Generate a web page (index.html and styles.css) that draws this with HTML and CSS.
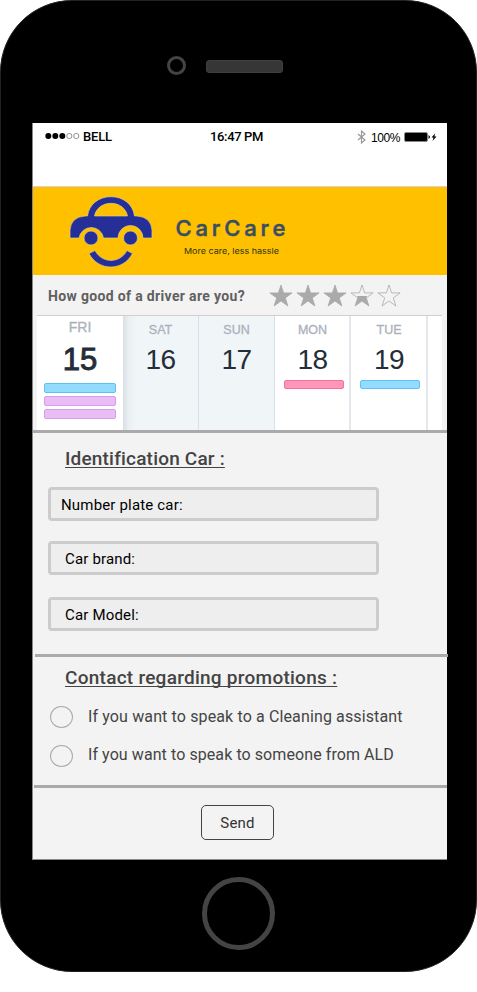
FILE: index.html
```html
<!DOCTYPE html>
<html lang="en">
<head>
<meta charset="utf-8">
<title>CarCare</title>
<link rel="stylesheet" href="styles.css">
</head>
<body>
<div class="phone">
  <div class="phone-top"><span class="camera"></span><span class="speaker"></span></div>
  <main class="screen">
    <header class="status">
      <div class="carrier">
        <svg width="35" height="8" viewBox="0 0 35 8"><g fill="#000"><circle cx="3.3" cy="4" r="3"/><circle cx="10.3" cy="4" r="3"/><circle cx="17.3" cy="4" r="3"/></g><g fill="none" stroke="#777" stroke-width=".8"><circle cx="24.3" cy="4" r="2.6"/><circle cx="31.3" cy="4" r="2.6"/></g></svg>
        <span class="bell">BELL</span>
      </div>
      <span class="time">16:47 PM</span>
      <div class="power">
        <svg width="10" height="14" viewBox="0 0 10 14" fill="none" stroke="#999" stroke-width="1.200"><path d="M1 4l7 6-3.500 3V1L8 4 1 10"/></svg>
        <span class="percent">100%</span>
        <svg class="battery" width="34" height="10" viewBox="0 0 34 10"><rect x=".5" y=".5" width="23" height="9" rx="1.500" stroke="#888"/><path d="M24.500 3Q26 4 26 5T24.500 7zM31 1.500l-3.500 4h2L28.500 9l4-4.500h-2z"/></svg>
      </div>
    </header>
    <section class="brand">
      <svg class="car" width="84" height="74" viewBox="69 195 84 74" fill="#262f97" stroke="#d5cf8c" stroke-width=".7">
        <path fill-rule="evenodd" d="M70 238V230Q71 217 85 216H87.500C89 204 99 196.700 111 196.700S133 204 134.500 216H137Q151 217 152 230V238H143A12.400 12.400 0 0 0 118 238H103.500A12.400 12.400 0 0 0 79 238ZM94.500 216H127.500C126 208 119 203.300 111 203.300S96 208 94.500 216Z"/>
        <circle cx="91" cy="238" r="7"/><circle cx="130.500" cy="238" r="7"/>
        <path d="M89 253.500L95 250.500C102 263.700 120 263.700 127 250.500L132.500 253.500C123 271.500 98.500 271.500 89 253.500Z"/>
      </svg>
      <svg class="wordmark" width="112" height="42" viewBox="175 216 112 42"><text class="name" x="175.500" y="235.500" textLength="110">CarCare</text><text class="tagline" x="184" y="254" textLength="95" lengthAdjust="spacingAndGlyphs">More care, less hassle</text></svg>
    </section>
    <section class="rating">
      <span class="question">How good of a driver are you?</span>
      <svg width="132" height="24" viewBox="269 284 132 24" fill="#aaa" stroke="#aaa" stroke-width=".8">
        <defs><path id="star" d="M0-11.500L2.600-3.600H11.100L4.300 1.400 6.900 9.500 0 4.500-6.900 9.500-4.300 1.400-11.100-3.600H-2.600Z"/></defs>
        <use href="#star" x="281" y="296.500"/><use href="#star" x="308" y="296.500"/><use href="#star" x="335" y="296.500"/>
        <use href="#star" x="362" y="296.500" fill="none"/><path stroke="none" d="M357 296H367L366.300 297.900 368.900 306 362 301 355.100 306 357.700 297.900Z"/>
        <use href="#star" x="389" y="296.500" fill="none"/>
      </svg>
    </section>
    <section class="calendar">
      <div class="day today"><span class="dow">FRI</span><span class="num">15</span><i class="event blue"></i><i class="event purple"></i><i class="event purple"></i></div>
      <div class="day weekend first"><span class="dow">SAT</span><span class="num">16</span></div>
      <div class="day weekend"><span class="dow">SUN</span><span class="num">17</span></div>
      <div class="day"><span class="dow">MON</span><span class="num">18</span><i class="event pink"></i></div>
      <div class="day"><span class="dow">TUE</span><span class="num">19</span><i class="event blue"></i></div>
    </section>
    <section class="identification">
      <h2>Identification Car :</h2>
      <div class="field plate">Number plate car:</div>
      <div class="field make">Car brand:</div>
      <div class="field model">Car Model:</div>
    </section>
    <section class="contact">
      <h2>Contact regarding promotions :</h2>
      <div class="option"><span class="radio"></span><span class="cleaning">If you want to speak to a Cleaning assistant</span></div>
      <div class="option"><span class="radio"></span><span class="ald">If you want to speak to someone from ALD</span></div>
    </section>
    <footer class="actions"><button>Send</button></footer>
  </main>
  <span class="home"></span>
</div>
</body>
</html>
```
FILE: styles.css
```css
* { box-sizing: border-box; }
body { margin: 0; background: #fff; font-family: Roboto, sans-serif; }
svg { display: block; flex: none; }
h2, button { margin: 0; font-family: inherit; }
span { white-space: nowrap; }

.phone { width: 477px; height: 972px; background: #000; border: 1px solid #222; border-radius: 72px; display: flex; flex-direction: column; }
.phone-top { height: 122px; flex: none; display: flex; padding: 55px 0 0 166px; }
.camera { width: 19px; height: 19px; border: 3px solid #444; border-radius: 50%; }
.speaker { width: 77px; height: 13px; margin: 4px 0 0 20px; background: #363636; border: 1px solid #3e3e3e; border-radius: 3px; }
.screen { width: 415px; height: 737px; flex: none; margin-left: 31px; background: #f3f3f3; border: solid #888; border-width: 0 0 1px 1px; }
.home { width: 73px; height: 73px; margin: 17px 0 0 201px; border: 5px solid #444; border-radius: 50%; flex: none; }

.status { height: 64px; background: #fff; border-bottom: 1px solid #d2d2d2; display: grid; grid-template-columns: 177px 147px 1fr; padding-top: 5px; }
.carrier { display: flex; padding-left: 12px; height: 18px; }
.carrier svg { margin-top: 4px; }
.bell, .time { font-size: 13px; font-weight: 500; line-height: 18px; color: #000; letter-spacing: -.35px; }
.bell { margin-left: 3px; letter-spacing: -.2px; }
.power { display: flex; height: 20px; }
.power svg:first-child { margin-top: 2px; }
.percent { font: 12px/20px "Liberation Sans", sans-serif; margin-left: 4px; width: 30px; letter-spacing: -.4px; }
.battery { margin: 4px 0 0 3px; }

.brand { height: 88px; background: #ffc000; display: flex; }
.car { margin: 8px 0 0 36px; }
.wordmark { margin: 29px 0 0 22px; }
.name { font: 500 22px Inter, sans-serif; fill: #384d68; stroke: #384d68; stroke-width: .5px; }
.tagline { font: 8px Inter, sans-serif; fill: #2b3410; }

.rating { height: 40px; display: flex; }
.question { width: 221px; padding-left: 15px; font-size: 14px; font-weight: 700; line-height: 42px; letter-spacing: .34px; color: #606060; }
.rating svg { margin: 9px 0 0 15px; }

.calendar { width: 405px; height: 115px; margin-left: 4px; background: #fff; border-top: 1px solid #d8cccc; display: grid; grid-template-columns: 86px 76px 76px 76px 77px 1fr; font-family: "Liberation Sans", sans-serif; }
.day { display: flex; flex-direction: column; align-items: center; border-right: 2px solid #e4e8ec; padding-left: 1px; }
.dow { margin-top: 5px; font-size: 12.5px; line-height: 18px; color: #aab1bb; -webkit-text-stroke: .3px #aab1bb; }
.num { font-size: 28px; line-height: 32px; margin-top: 5px; color: #252d38; letter-spacing: -.5px; }
.event { width: 60px; height: 9px; margin-top: 4px; border: 1px solid; border-radius: 2px; }
.blue { background: #93dbff; border-color: #5cc4f5; }
.purple { background: #e8bef4; border-color: #d99ceb; }
.pink { background: #ff98b8; border-color: #f76f9b; }
.weekend { background: #f0f5f8; border-right: 1px solid #d6e0e6; padding: 0; }
.first { background: linear-gradient(90deg, #d9dfe3, #ebf0f3 6px, #f0f5f8 14px); }
.today { border: 0; padding: 0; }
.today .dow { margin-top: 2px; font-size: 14px; }
.today .num { font-size: 31px; margin-top: 8px; letter-spacing: 0; -webkit-text-stroke: 1px #252d38; }
.today .event { width: 72px; height: 10px; margin-top: 3px; }
.today .num + .event { margin-top: 7px; }
.day:nth-child(n+4) .event { margin-left: 2px; }

.identification, .contact, .actions { border-top: 3px solid #aaa; }
h2 { width: max-content; font-size: 19px; font-weight: 500; line-height: 24px; letter-spacing: .19px; color: #444; text-decoration: underline; text-decoration-thickness: 1px; text-underline-offset: 2px; text-decoration-skip-ink: none; }
.identification { height: 224px; }
.identification h2 { margin: 14px 0 0 32px; }
.field { width: 331px; height: 34px; margin-left: 15px; border: 3px solid #ccc; border-radius: 4px; background: #eee; padding-left: 14px; font-size: 15px; line-height: 30px; letter-spacing: .17px; color: #000; }
.plate { margin-top: 16px; padding-left: 10px; }
.make { margin-top: 20px; }
.model { margin-top: 22px; }
.contact { height: 131px; width: 413px; margin-left: 2px; }
.contact h2 { margin: 9px 0 16px 30px; letter-spacing: .26px; }
.option { display: flex; height: 22px; margin: 0 0 17px 15px; }
.radio { width: 23px; height: 22px; border: 1px solid #aaa; border-radius: 50%; }
.option span + span { margin-left: 15px; font-size: 16px; line-height: 21px; color: #444; letter-spacing: .13px; }
.option .ald { line-height: 19px; letter-spacing: .08px; }
.actions { margin-left: 1px; padding: 17px 0 0 167px; }
button { display: block; width: 73px; height: 35px; padding: 0; border: 1px solid #444; border-radius: 5px; background: #f3f3f3; font-size: 15px; letter-spacing: .2px; color: #333; }
```
